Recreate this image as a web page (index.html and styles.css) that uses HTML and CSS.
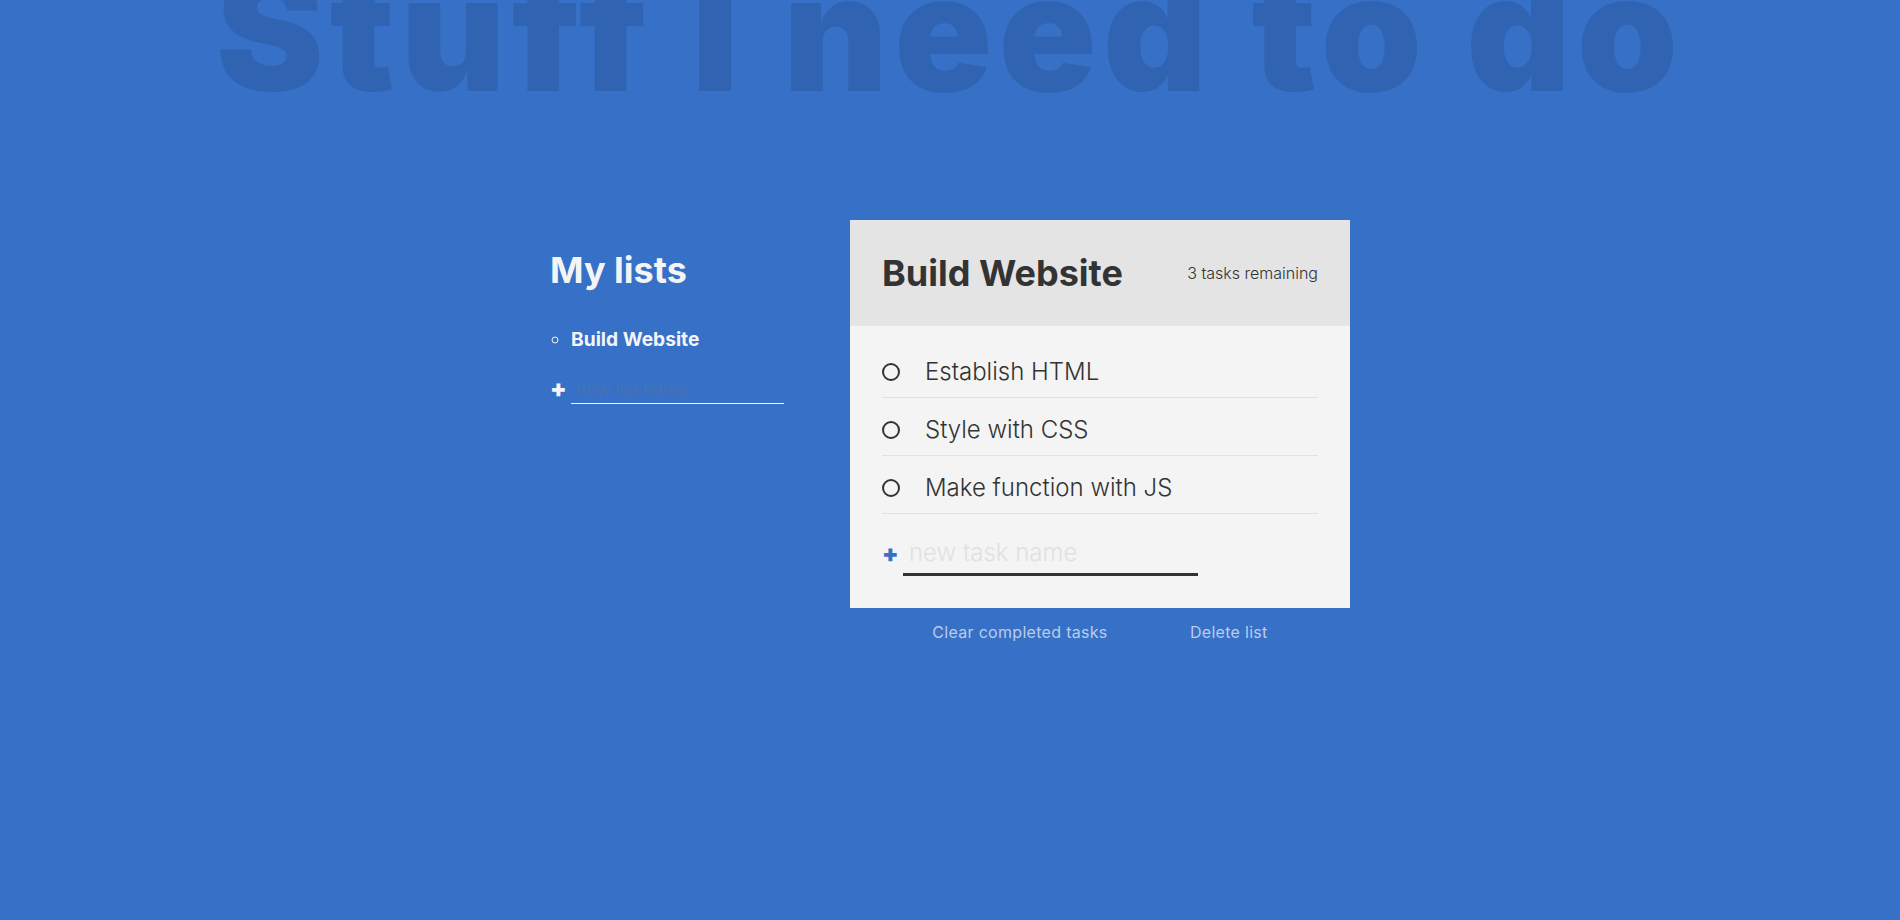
FILE: index.html
```html
<!DOCTYPE html>
<html lang="en">
<head>
<meta charset="utf-8">
<title>Todo App</title>
<link rel="stylesheet" href="styles.css">
</head>
<body>
<h1 class="title">Stuff I need to do</h1>

<div class="all-tasks">
  <h2 class="task-list-title">My lists</h2>
  <ul class="task-list">
    <li class="list-name active-list">Build Website</li>
  </ul>
  <form class="new-form" action="">
    <button type="button" class="btn create" aria-label="create new list">+</button>
    <input type="text" class="new new-list" placeholder="new list name" aria-label="new list name">
  </form>
</div>

<div class="todo-list">
  <div class="todo-card">
    <div class="todo-header">
      <h2 class="list-title">Build Website</h2>
      <p class="task-count">3 tasks remaining</p>
    </div>
    <div class="todo-body">
      <div class="tasks">
        <div class="task-item"><label><span class="custom-checkbox"></span>Establish HTML</label></div>
        <div class="task-item"><label><span class="custom-checkbox"></span>Style with CSS</label></div>
        <div class="task-item"><label><span class="custom-checkbox"></span>Make function with JS</label></div>
      </div>
      <form class="new-form new-task-creator" action="">
        <button type="button" class="btn create" aria-label="create new task">+</button>
        <input type="text" class="new new-task" placeholder="new task name" aria-label="new task name">
      </form>
    </div>
  </div>
  <div class="delete-stuff">
    <button type="button" class="btn delete">Clear completed tasks</button>
    <button type="button" class="btn delete">Delete list</button>
  </div>
</div>
</body>
</html>
```
FILE: styles.css
```css
*, *::before, *::after { box-sizing: border-box; }

body {
  margin: 0;
  font-family: "Inter", "Noto Sans", sans-serif;
  font-weight: 300;
  font-size: 24px;
  background-color: #3670c7;
  color: #f4f4f4;
  display: grid;
  grid-template-columns: 1fr 300px 500px 1fr;
  grid-template-areas:
    "header header header header"
    ". lists active .";
  align-items: start;
}

.title {
  grid-area: header;
  text-align: center;
  font-size: 162px;
  line-height: 162px;
  font-weight: 900;
  color: rgba(0, 0, 0, 0.1);
  letter-spacing: 6px;
  margin: -49px 0 107px;
  white-space: nowrap;
}

.all-tasks {
  grid-area: lists;
}

.task-list-title {
  margin: 29px 0 0;
  font-size: 36px;
  line-height: 42px;
  font-weight: 700;
}

.task-list {
  font-size: 19.2px;
  line-height: 1.7;
  list-style: circle;
  padding-left: 21px;
  margin: 32px 0 18px;
}

.active-list {
  font-weight: 700;
}

.new-form {
  display: flex;
  align-items: center;
  margin: 0;
}

.btn {
  background: none;
  border: 0;
  padding: 0;
  color: inherit;
  font-family: inherit;
  cursor: pointer;
}

.btn.create {
  font-size: 24px;
  line-height: 1;
  font-weight: 900;
  width: 15px;
  margin-right: 6px;
}

.new {
  background: transparent;
  border: 0;
  color: inherit;
  font-family: inherit;
  font-weight: 300;
  outline: none;
  margin: 0;
  border-bottom: 1px solid currentColor;
}

.new-list {
  font-size: 17.6px;
  line-height: 21px;
  padding: 4.4px;
  width: 213px;
}

.new-list::placeholder {
  color: rgb(79, 112, 168);
  opacity: 1;
}

.todo-list {
  grid-area: active;
}

.todo-card {
  background: #f4f4f4;
  color: #333;
}

.todo-header {
  padding: 32px;
  background: #e4e4e4;
  display: flex;
  align-items: center;
  justify-content: space-between;
}

.list-title {
  margin: 0 1em 0 0;
  font-size: 36px;
  line-height: 42px;
  font-weight: 700;
}

.task-count {
  margin: 0;
  font-size: 16px;
  font-weight: 300;
}

.todo-body {
  padding: 32px;
}

.task-item {
  padding-bottom: 11px;
  margin-bottom: 18px;
  border-bottom: 1px solid #e1e1e1;
}

.task-item label {
  display: flex;
  align-items: center;
  line-height: 28px;
  font-size: 24px;
  font-weight: 300;
  color: #333;
}

.custom-checkbox {
  display: inline-block;
  flex: none;
  width: 18px;
  height: 18px;
  margin-right: 25px;
  border: 2px solid currentColor;
  border-radius: 50%;
}

.new-task-creator .create {
  color: #3670c7;
}

.new-task {
  font-size: 24px;
  line-height: 29px;
  padding: 6px;
  width: 295px;
  color: #333;
  border-bottom: 3px solid #333;
}

.new-task::placeholder {
  color: #e1e1e1;
  opacity: 1;
}

.delete-stuff {
  display: flex;
  justify-content: space-evenly;
  margin-top: 15px;
}

.btn.delete {
  font-size: 16px;
  font-weight: 400;
  line-height: 19px;
  letter-spacing: 0.3px;
  color: rgb(187, 204, 231);
}
```
